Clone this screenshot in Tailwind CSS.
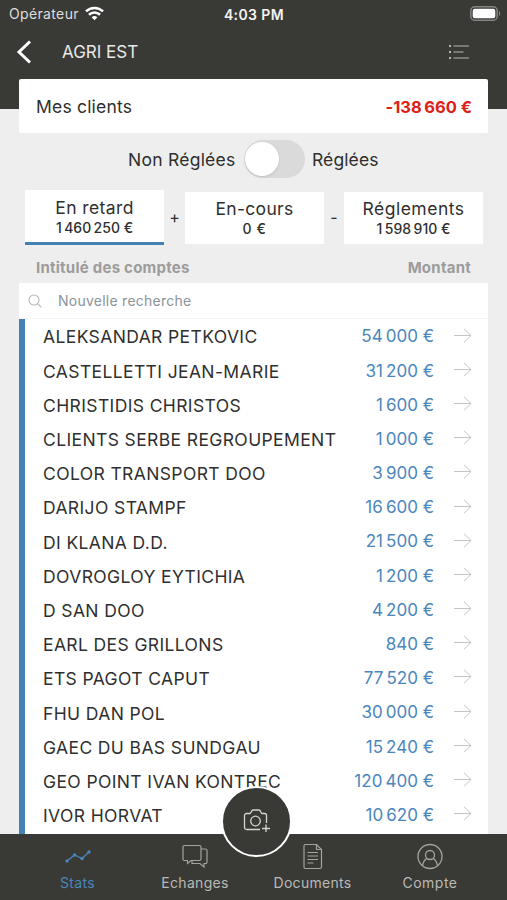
<!DOCTYPE html>
<html lang="fr">
<head>
  <meta charset="UTF-8">
  <meta name="viewport" content="width=device-width, initial-scale=1.0">
  <title>AGRI EST - Mes clients</title>
  <script src="https://cdn.jsdelivr.net/npm/@tailwindcss/browser@4"></script>
</head>
<body class="bg-[#eeeeee] font-['Inter',sans-serif] text-[#2f2f2f]">
  <div class="relative flex h-[900px] w-[507px] flex-col overflow-hidden">

    <!-- Header -->
    <header class="h-[109px] shrink-0 bg-[#393a36] text-white">
      <div class="grid h-7 grid-cols-3 items-center pr-[6px] pl-[9px]">
        <div class="flex items-center gap-[6px]">
          <span class="text-[14px] leading-7 tracking-[0.35px] text-[#dededc]">Opérateur</span>
          <svg class="-mt-[2px] h-[15px] w-[19px]" viewBox="0 0 19 15" fill="none" stroke="#fff" stroke-width="2.6">
            <path d="M1 5.400a12.200 12.200 0 0 1 17 0"/>
            <path d="M4 8.800a7.900 7.900 0 0 1 11 0"/>
            <path d="M9.500 14.200 6.600 11.300a4.200 4.200 0 0 1 5.800 0z" fill="#fff" stroke="none"/>
          </svg>
        </div>
        <span class="-ml-[2px] text-center text-[14px] font-semibold tracking-[0.4px] text-[#f4f4f2]">4:03 PM</span>
        <svg class="-mt-[2px] h-[15px] w-[31px] justify-self-end" viewBox="0 0 31 15">
          <rect x=".8" y=".8" width="26.400" height="13.400" rx="4" fill="none" stroke="#858683" stroke-width="1.500"/>
          <rect x="2.700" y="2.700" width="22.600" height="9.600" rx="2.200" fill="#fff"/>
          <path d="M29 5v5c1.600-.8 1.600-4.200 0-5z" fill="#858683"/>
        </svg>
      </div>
      <div class="flex h-12 items-center pr-[37px] pl-[16px]">
        <svg class="h-6 w-4" viewBox="0 0 16 24" fill="none" stroke="#fff" stroke-width="3">
          <path d="M14 1.500 3 12l11 10.500"/>
        </svg>
        <h1 class="mt-[2px] ml-[30px] text-[17px] text-[#e8e8e6]">AGRI EST</h1>
        <svg class="ml-auto h-4 w-[22px]" viewBox="0 0 22 16" stroke="#b5b5b2" stroke-width="1.100">
          <path d="M1 2h2M1 8h2M1 14h2" stroke-width="2"/>
          <path d="M5.500 2H21M5.500 8H15.500M5.500 14H21"/>
        </svg>
      </div>
    </header>

    <!-- Total -->
    <section class="relative z-10 mx-[19px] -mt-[30px] flex h-[54px] shrink-0 items-center justify-between rounded-[2px] bg-white pt-[2px] pr-[16px] pl-[17px]">
      <span class="text-[17.500px] tracking-[0.2px]">Mes clients</span>
      <span class="text-[16.500px] font-bold tracking-[0.4px] text-[#dc2118]">-138&#8239;660 €</span>
    </section>

    <!-- Switch -->
    <div class="flex h-[52px] shrink-0 items-center pl-[128px]">
      <span class="mt-[2px] w-[108px] text-[17.500px] tracking-[0.250px] whitespace-nowrap">Non Réglées</span>
      <span class="ml-[8px] flex h-[38px] w-[61px] items-center rounded-full bg-[#dadada] pl-[1px]">
        <span class="h-[34px] w-[34px] rounded-full bg-white shadow"></span>
      </span>
      <span class="mt-[2px] ml-[7px] text-[17.500px] tracking-[0.1px]">Réglées</span>
    </div>

    <!-- Filters -->
    <div class="flex h-[60px] shrink-0 items-start pt-[5px] pl-[25px] text-center">
      <div class="h-[55px] w-[139px] border-b-[3px] border-[#4381b4] bg-white pt-[6px]">
        <p class="text-[17.500px] leading-[24px] tracking-[0.4px]">En retard</p>
        <p class="text-[14px] leading-[16px] font-medium tracking-[0.2px]">1&#8239;460&#8239;250 €</p>
      </div>
      <span class="mt-[15px] w-[21px] text-[16px]">+</span>
      <div class="mt-[2px] h-[52px] w-[139px] bg-white pt-[5px]">
        <p class="text-[17.500px] leading-[24px] tracking-[0.3px]">En-cours</p>
        <p class="text-[14px] leading-[16px] font-medium tracking-[0.6px]">0 €</p>
      </div>
      <span class="mt-[15px] w-[20px] text-[16px]">-</span>
      <div class="mt-[2px] h-[52px] w-[139px] bg-white pt-[5px]">
        <p class="text-[17.500px] leading-[24px] tracking-[0.5px]">Réglements</p>
        <p class="text-[14px] leading-[16px] font-medium tracking-[0.4px]">1&#8239;598&#8239;910 €</p>
      </div>
    </div>

    <div class="flex h-[38px] shrink-0 items-center justify-between pt-[8px] pr-[36px] pl-[36px] text-[15px] font-bold tracking-[0.25px] text-[#9c9c9c]">
      <span>Intitulé des comptes</span>
      <span>Montant</span>
    </div>

    <!-- Accounts -->
    <main class="mx-[19px] h-[553px] shrink-0 bg-white">
      <div class="flex h-[36px] items-center border-b border-[#f4f4f4] pl-[9px]">
        <svg class="h-[14px] w-[14px]" viewBox="0 0 14 14" fill="none" stroke="#b4b8ba" stroke-width="1.100">
          <circle cx="6" cy="6" r="5"/>
          <path d="M9.600 9.600 13.300 13.300"/>
        </svg>
        <span class="ml-[16px] text-[14px] tracking-[0.25px] text-[#8b9399]">Nouvelle recherche</span>
      </div>
      <div id="comptes" class="h-[517px] border-l-[6px] border-[#4381b4] pt-[1px]"></div>
    </main>

    <!-- Tab bar -->
    <nav class="absolute inset-x-0 bottom-0 flex h-[66px] bg-[#393a36] pl-[19px] text-[14px] tracking-[0.3px] text-[#b9b9b6]">
      <div class="flex w-[117px] flex-col items-center text-[#4a86bd]">
        <svg class="mt-[10px] h-[26px] w-[26px]" viewBox="0 0 26 26" fill="none" stroke="currentColor" stroke-width="1.200">
          <path d="M2 17 9.500 11 17 14.500 24 8"/>
          <g fill="currentColor" stroke="none">
            <circle cx="2" cy="17" r="1.700"/><circle cx="9.500" cy="11" r="1.700"/><circle cx="17" cy="14.500" r="1.700"/><circle cx="24" cy="8" r="1.700"/>
          </g>
        </svg>
        <span class="mt-[2px] leading-[21px]">Stats</span>
      </div>
      <div class="flex w-[118px] flex-col items-center">
        <svg class="mt-[10px] h-[26px] w-[26px]" viewBox="0 0 26 26" fill="none" stroke="#a3a39f" stroke-width="1.200">
          <path d="M2.500 1.500h15a1.500 1.500 0 0 1 1.500 1.500v12a1.500 1.500 0 0 1-1.500 1.500H9L5.500 19.500v-3h-3A1.500 1.500 0 0 1 1 15V3a1.500 1.500 0 0 1 1.500-1.500z"/>
          <path d="M19 5h4.500A1.500 1.500 0 0 1 25 6.500V18a1.500 1.500 0 0 1-1.500 1.500H22V23l-4-3.500h-8V17"/>
        </svg>
        <span class="mt-[2px] leading-[21px]">Echanges</span>
      </div>
      <div class="flex w-[117px] flex-col items-center">
        <svg class="mt-[9px] h-[27px] w-[20px]" viewBox="0 0 20 27" fill="none" stroke="#a3a39f" stroke-width="1.200">
          <path d="M2.500 1.500h11l5 5V24a1.500 1.500 0 0 1-1.500 1.500H2.500A1.500 1.500 0 0 1 1 24V3a1.500 1.500 0 0 1 1.500-1.500z"/>
          <path d="M13.500 1.500v5h5M4.500 9.500h10.500M4.500 13h10.500M4.500 16.500h10.500M4.500 20h6"/>
        </svg>
        <span class="mt-[2px] leading-[21px]">Documents</span>
      </div>
      <div class="flex w-[118px] flex-col items-center">
        <svg class="mt-[9px] h-[27px] w-[26px]" viewBox="0 0 26 27" fill="none" stroke="#a3a39f" stroke-width="1.300">
          <circle cx="13" cy="13.500" r="12"/>
          <circle cx="13" cy="12" r="4.500"/>
          <path d="M5.500 22.500c.8-4 2.500-6 4.500-7.200M20.500 22.500c-.8-4-2.500-6-4.500-7.200"/>
        </svg>
        <span class="mt-[2px] leading-[21px] tracking-[0.5px]">Compte</span>
      </div>
    </nav>

    <!-- Scan button -->
    <button class="absolute top-[786px] left-[221px] flex h-[71px] w-[71px] items-center justify-center rounded-full border-2 border-white bg-[#393a36]">
      <svg class="-mt-[5px] h-[26px] w-[28px]" viewBox="0 0 28 26" fill="none" stroke="#d4d4d1" stroke-width="1.300">
        <path d="M17 23.500H3.500a2 2 0 0 1-2-2V9.500a2 2 0 0 1 2-2H7c1 0 1.500-3.500 3-3.500h6c1.500 0 2 3.500 3 3.500h2.500a2 2 0 0 1 2 2V17"/>
        <circle cx="12.500" cy="15" r="4.800"/>
        <path d="M23 18.500v8M19 22.500h8"/>
      </svg>
    </button>
  </div>

  <script>
    const comptes = [
      ['ALEKSANDAR PETKOVIC', 54000],
      ['CASTELLETTI JEAN-MARIE', 31200],
      ['CHRISTIDIS CHRISTOS', 1600],
      ['CLIENTS SERBE REGROUPEMENT', 1000],
      ['COLOR TRANSPORT DOO', 3900],
      ['DARIJO STAMPF', 16600],
      ['DI KLANA D.D.', 21500],
      ['DOVROGLOY EYTICHIA', 1200],
      ['D SAN DOO', 4200],
      ['EARL DES GRILLONS', 840],
      ['ETS PAGOT CAPUT', 77520],
      ['FHU DAN POL', 30000],
      ['GAEC DU BAS SUNDGAU', 15240],
      ['GEO POINT IVAN KONTREC', 120400],
      ['IVOR HORVAT', 10620]
    ];

    // Espace fine entre les milliers
    function montant(n) {
      return String(n).replace(/\B(?=(\d{3})+$)/g, '\u202f') + ' €';
    }

    document.getElementById('comptes').innerHTML = comptes.map(([nom, total]) => `
      <div class="flex h-[34.200px] items-center pr-[16px] pl-[18px]">
        <span class="pt-px text-[17.500px] tracking-[0.380px] whitespace-nowrap">${nom}</span>
        <span class="ml-auto text-[17px] whitespace-nowrap text-[#4a86bd]">${montant(total)}</span>
        <svg class="-mt-[4px] ml-[19px] h-[15px] w-[19px]" viewBox="0 0 19 15" fill="none" stroke="#c4c4c4" stroke-width="1">
          <path d="M1 7.500h17M11 .8 18 7.500 11 14.200"/>
        </svg>
      </div>`).join('');
  </script>
</body>
</html>
